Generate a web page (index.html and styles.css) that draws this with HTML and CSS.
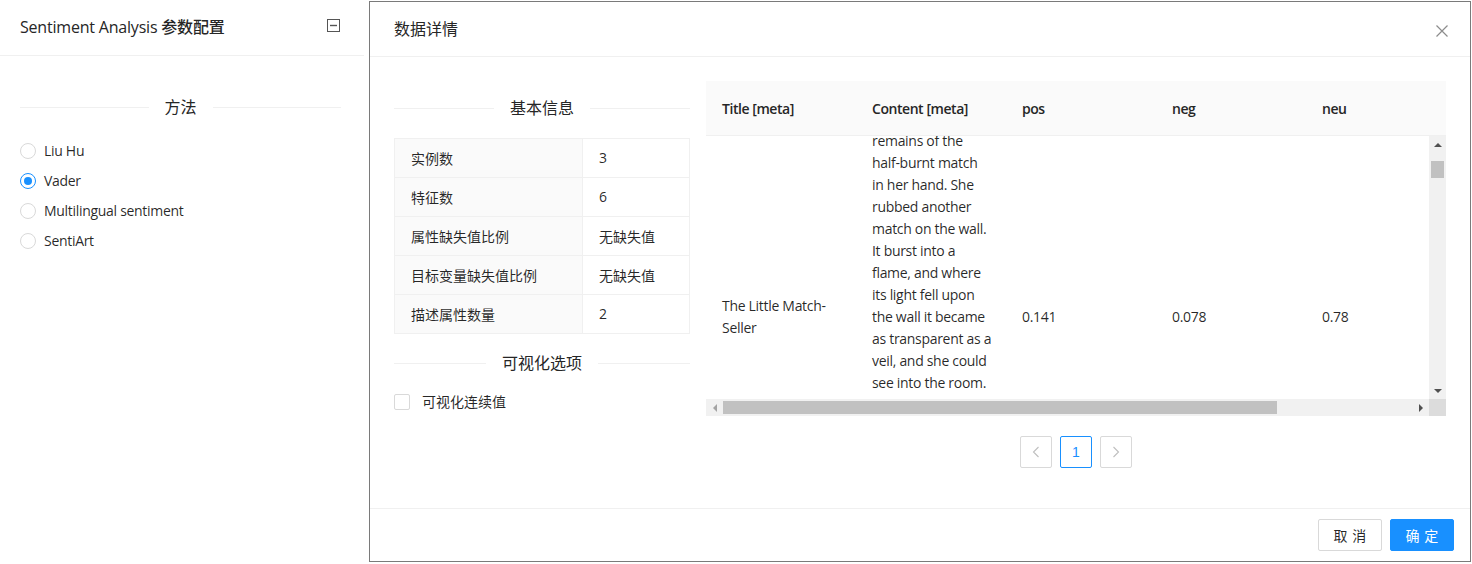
FILE: index.html
```html
<!DOCTYPE html>
<html lang="zh-CN">
<head>
<meta charset="utf-8">
<title>Sentiment Analysis 参数配置</title>
<link rel="stylesheet" href="styles.css">
</head>
<body>
<div class="app">
  <aside class="panel">
    <div class="panel-header">
      <span class="panel-title">Sentiment Analysis 参数配置</span>
      <svg class="collapse" width="13" height="13" viewBox="0 0 13 13"><rect x="0.5" y="0.5" width="12" height="12" fill="none" stroke="#555"/><line x1="3" y1="6.5" x2="10" y2="6.5" stroke="#555" stroke-width="1.4"/></svg>
    </div>
    <div class="panel-body">
      <div class="divider panel-divider"><span>方法</span></div>
      <div class="radio-group">
        <label class="radio"><span class="radio-dot"></span>Liu Hu</label>
        <label class="radio"><span class="radio-dot checked"></span>Vader</label>
        <label class="radio"><span class="radio-dot"></span>Multilingual sentiment</label>
        <label class="radio"><span class="radio-dot"></span>SentiArt</label>
      </div>
    </div>
  </aside>

  <section class="modal">
    <header class="modal-header">
      <span class="modal-title">数据详情</span>
      <span class="close"><svg width="12" height="12" viewBox="0 0 12 12"><path d="M0.5 0.5 L11.5 11.5 M11.5 0.5 L0.5 11.5" stroke="#8c8c8c" stroke-width="1.2" fill="none"/></svg></span>
    </header>

    <div class="modal-body">
      <div class="info">
        <div class="divider info-divider"><span>基本信息</span></div>
        <div class="info-table">
          <div class="info-row"><div class="info-label">实例数</div><div class="info-value">3</div></div>
          <div class="info-row"><div class="info-label">特征数</div><div class="info-value">6</div></div>
          <div class="info-row"><div class="info-label">属性缺失值比例</div><div class="info-value">无缺失值</div></div>
          <div class="info-row"><div class="info-label">目标变量缺失值比例</div><div class="info-value">无缺失值</div></div>
          <div class="info-row"><div class="info-label">描述属性数量</div><div class="info-value">2</div></div>
        </div>
        <div class="divider vis-divider"><span>可视化选项</span></div>
        <label class="checkbox"><span class="checkbox-box"></span>可视化连续值</label>
      </div>

      <div class="data">
        <div class="table">
          <div class="thead">
            <div class="th">Title [meta]</div>
            <div class="th">Content [meta]</div>
            <div class="th">pos</div>
            <div class="th">neg</div>
            <div class="th">neu</div>
          </div>
          <div class="tbody-wrap">
            <div class="tbody-view">
              <div class="tr">
                <div class="td">The Little Match-<br>Seller</div>
                <div class="td content">remains of the<br>half-burnt match<br>in her hand. She<br>rubbed another<br>match on the wall.<br>It burst into a<br>flame, and where<br>its light fell upon<br>the wall it became<br>as transparent as a<br>veil, and she could<br>see into the room.</div>
                <div class="td">0.141</div>
                <div class="td">0.078</div>
                <div class="td">0.78</div>
              </div>
            </div>
            <div class="vscroll">
              <div class="sb-btn"><span class="tri up"></span></div>
              <div class="v-track"><div class="v-thumb"></div></div>
              <div class="sb-btn"><span class="tri down"></span></div>
            </div>
          </div>
          <div class="hscroll-row">
            <div class="hscroll">
              <div class="sb-btn"><span class="tri left"></span></div>
              <div class="h-track"><div class="h-thumb"></div></div>
              <div class="sb-btn"><span class="tri right"></span></div>
            </div>
            <div class="corner"></div>
          </div>
        </div>
        <div class="pagination">
          <span class="page-item disabled"><svg width="8" height="12" viewBox="0 0 8 12"><path d="M6.5 1 L1.5 6 L6.5 11" stroke="#bfbfbf" stroke-width="1.1" fill="none"/></svg></span>
          <span class="page-item active">1</span>
          <span class="page-item disabled"><svg width="8" height="12" viewBox="0 0 8 12"><path d="M1.5 1 L6.5 6 L1.5 11" stroke="#bfbfbf" stroke-width="1.1" fill="none"/></svg></span>
        </div>
      </div>
    </div>

    <footer class="modal-footer">
      <button class="btn">取消</button>
      <button class="btn primary">确定</button>
    </footer>
  </section>
</div>
</body>
</html>
```

FILE: styles.css
```css
* { box-sizing: border-box; }
html, body { margin: 0; padding: 0; }
body {
  width: 1472px;
  height: 564px;
  overflow: hidden;
  background: #fff;
  font-family: "Open Sans", "Noto Sans CJK SC", sans-serif;
  font-size: 14px;
  color: rgba(0, 0, 0, 0.85);
}
.app { display: flex; align-items: flex-start; height: 564px; }

/* left panel */
.panel { width: 364px; flex: none; }
.panel-header {
  height: 56px;
  border-bottom: 1px solid #f0f0f0;
  display: flex;
  align-items: center;
  justify-content: space-between;
  padding: 0 24px 2px 20px;
}
.panel-title { font-size: 16px; font-weight: 500; line-height: 22px; color: #262626; letter-spacing: -0.2px; }
.collapse { display: block; margin-top: -3px; }
.panel-body { padding: 0 23px 0 20px; }

.divider {
  display: flex;
  align-items: center;
  height: 24px;
  font-size: 16px;
  font-weight: 400;
  line-height: 24px;
  color: #262626;
  white-space: nowrap;
}
.divider::before, .divider::after {
  content: "";
  flex: 1;
  border-top: 1px solid #f0f0f0;
}
.divider span { padding: 0 16px; }
.panel-divider { margin-top: 39px; }

.radio-group { display: flex; flex-direction: column; gap: 8px; margin-top: 21px; }
.radio { display: flex; align-items: center; line-height: 22px; height: 22px; letter-spacing: -0.3px; }
.radio-dot {
  width: 16px; height: 16px;
  border: 1px solid #d9d9d9;
  border-radius: 50%;
  margin-right: 8px;
  display: flex; align-items: center; justify-content: center;
}
.radio-dot.checked { border-color: #1890ff; }
.radio-dot.checked::after {
  content: "";
  width: 8px; height: 8px; border-radius: 50%;
  background: #1890ff;
}

/* modal */
.modal {
  margin: 1px 0 0 5px;
  width: 1102px;
  height: 561px;
  flex: none;
  border: 1px solid #7a7a7a;
  background: #fff;
  display: flex;
  flex-direction: column;
}
.modal-header {
  height: 55px;
  flex: none;
  border-bottom: 1px solid #f0f0f0;
  display: flex;
  align-items: center;
  padding-left: 24px;
}
.modal-title { flex: 1; font-size: 16px; font-weight: 400; line-height: 22px; color: #262626; }
.close { width: 56px; height: 54px; display: flex; align-items: center; justify-content: center; padding-top: 3px; }
.close svg { display: block; }

.modal-body { flex: 1; display: flex; gap: 16px; padding: 24px 24px 0 24px; }

.info { width: 296px; flex: none; }
.info-divider { margin-top: 15px; }
.info-table { margin-top: 18px; border: 1px solid #f0f0f0; border-bottom: none; }
.info-row { display: flex; height: 39px; border-bottom: 1px solid #f0f0f0; }
.info-label {
  width: 188px;
  background: #fafafa;
  border-right: 1px solid #f0f0f0;
  padding: 0 0 1px 16px;
  display: flex; align-items: center;
}
.info-value { flex: 1; padding: 0 0 1px 16px; display: flex; align-items: center; }
.vis-divider { margin-top: 17px; }
.checkbox { display: flex; align-items: center; margin-top: 16px; height: 22px; line-height: 22px; }
.checkbox-box {
  width: 16px; height: 16px;
  border: 1px solid #d9d9d9; border-radius: 2px;
  margin-right: 12px;
}

/* data table */
.data { width: 740px; flex: none; }
.thead {
  display: flex;
  height: 55px;
  background: #fafafa;
  border-bottom: 1px solid #f0f0f0;
  overflow: hidden;
}
.th {
  width: 150px; flex: none;
  padding-left: 16px;
  font-weight: 600;
  letter-spacing: -0.45px;
  display: flex; align-items: center;
  color: #262626;
}
.tbody-wrap { display: flex; height: 263px; }
.tbody-view { flex: 1; overflow: hidden; }
/* the single data row is taller than the view; it is shown scrolled down by 22px */
.tr { display: flex; align-items: center; width: 900px; height: 406px; margin-top: -22px; }
.td { width: 150px; flex: none; padding: 16px; line-height: 22px; white-space: nowrap; letter-spacing: -0.3px; }
.td.content { align-self: flex-start; }

.vscroll { width: 17px; flex: none; background: #f1f1f1; display: flex; flex-direction: column; }
.sb-btn { width: 17px; height: 17px; flex: none; display: flex; align-items: center; justify-content: center; }
.v-track { flex: 1; display: flex; justify-content: center; }
.v-thumb { width: 13px; height: 17px; margin-top: 8px; background: #c1c1c1; }
.hscroll-row { display: flex; height: 17px; }
.hscroll { flex: 1; display: flex; background: #f1f1f1; }
.h-track { flex: 1; display: flex; align-items: center; }
.h-thumb { width: 554px; height: 13px; background: #c1c1c1; }
.corner { width: 17px; background: #dcdcdc; }

.tri { width: 0; height: 0; border: 4px solid transparent; }
.tri.up { border-bottom-color: #505050; border-top-width: 0; }
.tri.down { border-top-color: #505050; border-bottom-width: 0; }
.tri.left { border-right-color: #a3a3a3; border-left-width: 0; }
.tri.right { border-left-color: #505050; border-right-width: 0; }

.pagination { display: flex; justify-content: center; gap: 8px; margin-top: 20px; }
.page-item {
  width: 32px; height: 32px;
  border: 1px solid #d9d9d9; border-radius: 2px;
  display: flex; align-items: center; justify-content: center;
  font-family: "Liberation Sans", sans-serif;
  font-size: 14px;
}
.page-item.active { border-color: #1890ff; color: #1890ff; }

/* footer */
.modal-footer {
  height: 53px;
  flex: none;
  border-top: 1px solid #f0f0f0;
  display: flex;
  justify-content: flex-end;
  align-items: center;
  gap: 8px;
  padding: 0 16px;
}
.btn {
  height: 32px;
  width: 64px;
  border: 1px solid #d9d9d9;
  border-radius: 2px;
  background: #fff;
  font-family: "Noto Sans CJK SC", sans-serif;
  font-size: 14px;
  letter-spacing: 0.34em;
  text-indent: 0.34em;
  color: rgba(0, 0, 0, 0.85);
  padding: 0;
}
.btn.primary { background: #1890ff; border-color: #1890ff; color: #fff; }
```
